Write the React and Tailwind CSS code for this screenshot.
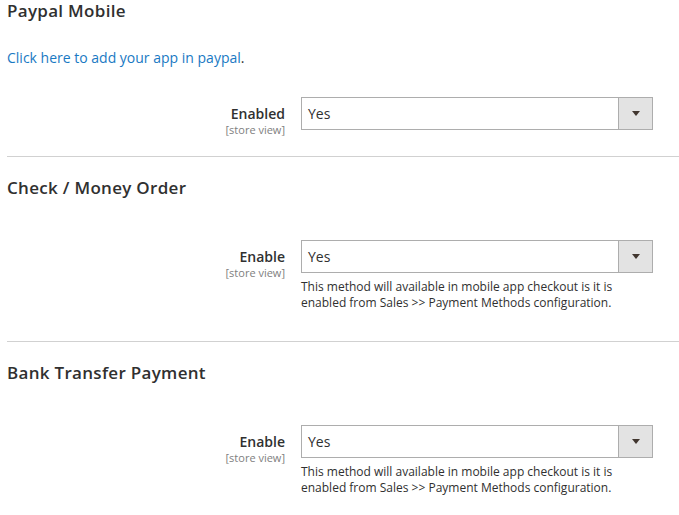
import React from "react";

function Field({ label, note }) {
  return (
    <div className="flex">
      <div className="w-[294px] shrink-0 pr-[16px] pt-[8px] text-right">
        <div className="text-[14px] leading-[18px] font-semibold text-[#303030]">{label}</div>
        <div className="text-[11px] leading-[13px] text-[#808080]">[store view]</div>
      </div>
      <div className="w-[352px] shrink-0">
        <div className="flex h-[33px] border border-[#adadad] bg-white">
          <div className="flex-1 pl-[6px] text-[14px] leading-[31px] text-[#303030]">Yes</div>
          <div className="flex w-[34px] items-center justify-center border-l border-[#adadad] bg-[#e3e3e3]">
            <svg width="8" height="5" viewBox="0 0 8 5">
              <path d="M0 0 L8 0 L4 5 Z" fill="#41362f" />
            </svg>
          </div>
        </div>
        {note && (
          <div className="mt-[6px] text-[12px] leading-[16px] text-[#303030]">
            This method will available in mobile app checkout is it is
            <br />
            enabled from Sales &gt;&gt; Payment Methods configuration.
          </div>
        )}
      </div>
    </div>
  );
}

export default function App() {
  return (
    <div
      className="w-[679px] h-[515px] overflow-hidden bg-white pl-[7px] pt-[1px]"
      style={{ fontFamily: '"Open Sans", "Liberation Sans", sans-serif' }}
    >
      <h2 className="text-[17px] leading-[20px] font-semibold tracking-[0.3px] text-[#303030]">
        Paypal Mobile
      </h2>
      <div className="mt-[27px] text-[14px] leading-[20px]">
        <span className="text-[#1979c3]">Click here to add your app in paypal</span>
        <span className="text-[#303030]">.</span>
      </div>
      <div className="mt-[29px]">
        <Field label="Enabled" />
      </div>
      <div className="mt-[20px] h-px bg-[#d1d1d1]" />

      <h2 className="mt-[21px] text-[17px] leading-[20px] font-semibold tracking-[0.3px] text-[#303030]">
        Check / Money Order
      </h2>
      <div className="mt-[42px]">
        <Field label="Enable" note />
      </div>
      <div className="mt-[30px] h-px bg-[#d1d1d1]" />

      <h2 className="mt-[21px] text-[17px] leading-[20px] font-semibold tracking-[0.3px] text-[#303030]">
        Bank Transfer Payment
      </h2>
      <div className="mt-[42px]">
        <Field label="Enable" note />
      </div>
    </div>
  );
}
